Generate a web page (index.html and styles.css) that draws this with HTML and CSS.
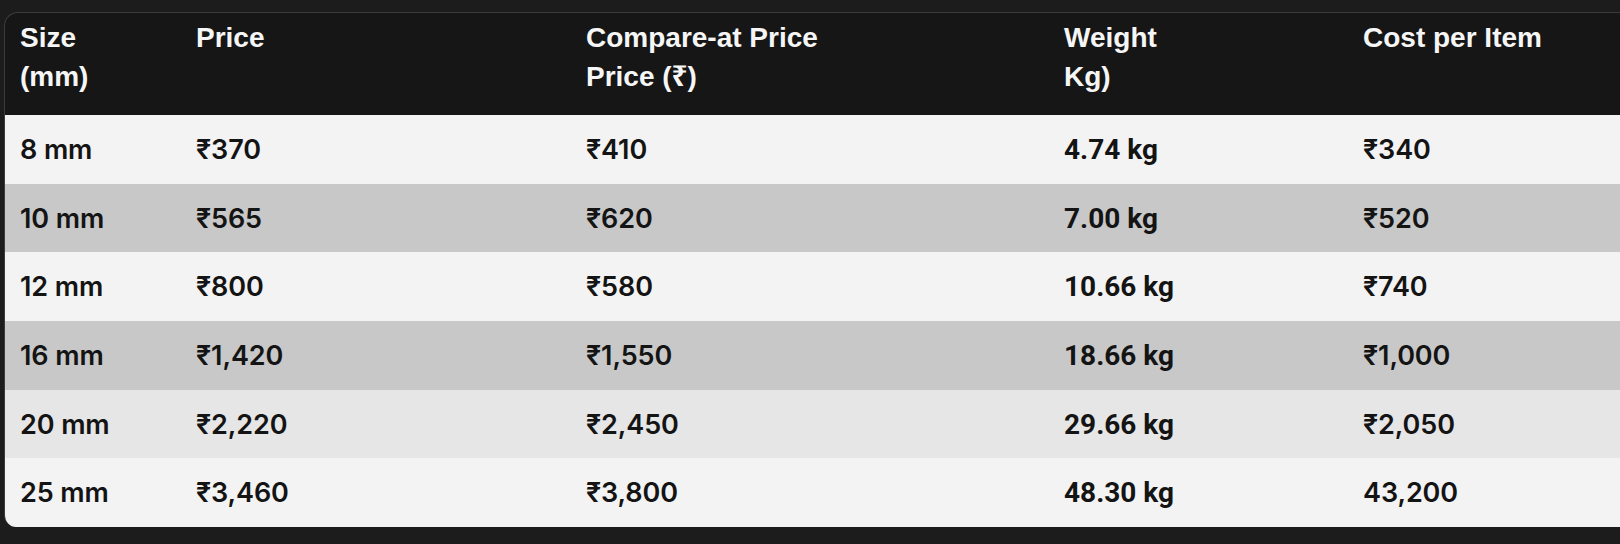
FILE: index.html
```html
<!DOCTYPE html>
<html lang="en">
<head>
<meta charset="utf-8">
<title>Rebar price table</title>
<link rel="stylesheet" href="styles.css">
</head>
<body>
<div class="card">
  <table class="price-table">
    <colgroup>
      <col class="c-size">
      <col class="c-price">
      <col class="c-compare">
      <col class="c-weight">
      <col class="c-cost">
    </colgroup>
    <thead>
      <tr>
        <th>Size<br>(mm)</th>
        <th>Price</th>
        <th>Compare-at Price<br>Price (₹)</th>
        <th>Weight<br>Kg)</th>
        <th>Cost per Item</th>
      </tr>
    </thead>
    <tbody>
      <tr class="r-light">
        <td>8 mm</td><td>₹370</td><td>₹410</td><td class="wt">4.74 kg</td><td>₹340</td>
      </tr>
      <tr class="r-dark">
        <td>10 mm</td><td>₹565</td><td>₹620</td><td class="wt">7.00 kg</td><td>₹520</td>
      </tr>
      <tr class="r-light">
        <td>12 mm</td><td>₹800</td><td>₹580</td><td class="wt">10.66 kg</td><td>₹740</td>
      </tr>
      <tr class="r-dark">
        <td>16 mm</td><td>₹1,420</td><td>₹1,550</td><td class="wt">18.66 kg</td><td>₹1,000</td>
      </tr>
      <tr class="r-mid">
        <td>20 mm</td><td>₹2,220</td><td>₹2,450</td><td class="wt">29.66 kg</td><td>₹2,050</td>
      </tr>
      <tr class="r-light">
        <td>25 mm</td><td>₹3,460</td><td>₹3,800</td><td class="wt">48.30 kg</td><td>43,200</td>
      </tr>
    </tbody>
  </table>
</div>
</body>
</html>
```

FILE: styles.css
```css
html, body {
  margin: 0;
  padding: 0;
  overflow: hidden;
  background: #1c1c1c;
}
body {
  padding: 12px 0 0 4px;
  font-family: "Liberation Sans", Arial, "Noto Sans", sans-serif;
}
.card {
  width: 1640px;
  border-top: 1px solid #3b3b3b;
  border-left: 1px solid #3b3b3b;
  border-radius: 14px 0 0 12px;
  overflow: hidden;
  background: #161616;
}
.price-table {
  width: 100%;
  border-collapse: collapse;
  table-layout: fixed;
}
.c-size { width: 176px; }
.c-price { width: 390px; }
.c-compare { width: 478px; }
.c-weight { width: 299px; }
.c-cost { width: auto; }

.price-table th {
  text-align: left;
  vertical-align: top;
  color: #f6f6f6;
  font-family: "Liberation Sans", Arial, "Noto Sans", sans-serif;
  font-size: 28px;
  font-weight: 700;
  line-height: 39px;
  padding: 5px 0 19px 15px;
}
.price-table td {
  height: 68.7px;
  padding: 0 0 0 15px;
  vertical-align: middle;
  color: #141414;
  font-family: Inter, "Noto Sans", sans-serif;
  font-size: 27px;
  font-weight: 600;
  letter-spacing: -0.1px;
}
.price-table td.wt {
  font-family: Roboto, "Liberation Sans", sans-serif;
  font-size: 28px;
  font-weight: 700;
  letter-spacing: 0;
}
.r-light td { background: #f3f3f3; }
.r-dark td { background: #c8c8c8; }
.r-mid td { background: #e6e6e6; }
```
